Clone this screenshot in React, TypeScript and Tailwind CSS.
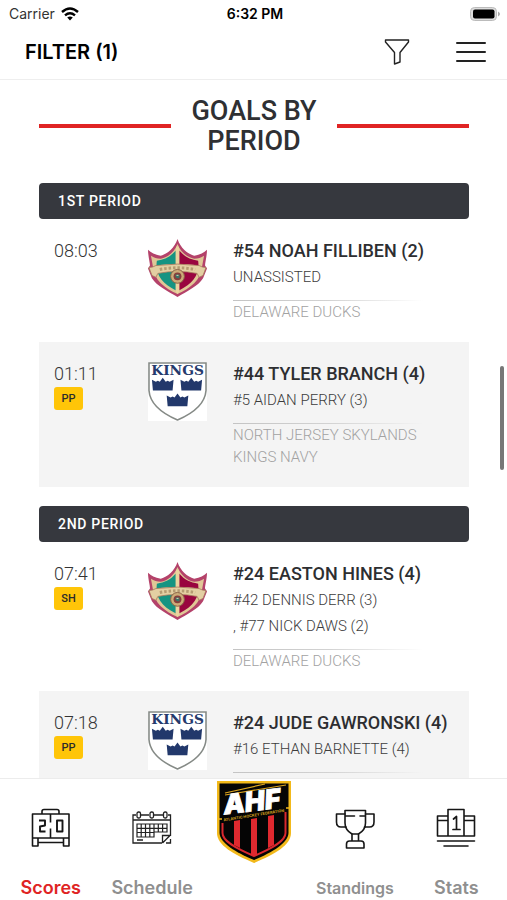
import React from "react";

type Team = "ducks" | "kings";

interface Goal {
  time: string;
  strength?: string;
  team: Team;
  scorer: string;
  assists: string[];
}

interface Period {
  name: string;
  goals: Goal[];
}

const teamNames: Record<Team, string> = {
  ducks: "DELAWARE DUCKS",
  kings: "NORTH JERSEY SKYLANDS KINGS NAVY",
};

const periods: Period[] = [
  {
    name: "1ST PERIOD",
    goals: [
      { time: "08:03", team: "ducks", scorer: "#54 NOAH FILLIBEN (2)", assists: ["UNASSISTED"] },
      { time: "01:11", strength: "PP", team: "kings", scorer: "#44 TYLER BRANCH (4)", assists: ["#5 AIDAN PERRY (3)"] },
    ],
  },
  {
    name: "2ND PERIOD",
    goals: [
      {
        time: "07:41",
        strength: "SH",
        team: "ducks",
        scorer: "#24 EASTON HINES (4)",
        assists: ["#42 DENNIS DERR (3)", ", #77 NICK DAWS (2)"],
      },
      { time: "07:18", strength: "PP", team: "kings", scorer: "#24 JUDE GAWRONSKI (4)", assists: ["#16 ETHAN BARNETTE (4)"] },
    ],
  },
];

function DucksLogo() {
  return (
    <svg viewBox="0 0 60 60" className="size-[59px]" aria-label="Delaware Ducks logo">
      <path d="M30 0 C33 9 40 15 47 17 C53 16 57 14 60 11 C60 17 58 24 58 27 L60 30 L56 40 C51 48 40 53 30 59 C20 53 9 48 4 40 L0 30 L2 27 C2 24 0 17 0 11 C3 14 7 16 13 17 C20 15 27 9 30 0Z" fill="#b4426a" />
      <path d="M30 5 C33 13 40 19 47 20 C51 20 54 19 57 17 L55 28 C54 42 43 50 30 56 C17 50 6 42 5 28 L3 17 C6 19 9 20 13 20 C20 19 27 13 30 5Z" fill="#e0c796" />
      <path d="M28 12 C23 18 17 21 9 22 C7 36 14 45 28 52Z" fill="#159482" />
      <path d="M32 12 C37 18 43 21 51 22 C53 36 46 45 32 52Z" fill="#99053f" />
      <path d="M28.500 8h3v46l-1.500 2-1.500-2z" fill="#ead49f" />
      <path d="M1 29 Q5 29 8 27 Q30 24 52 27 Q55 29 59 29 L56 37 L52 39 L50 35 Q30 31 10 35 L8 39 L4 37Z" fill="#e3cfa2" stroke="#a5775a" strokeWidth="0.8" />
      <path d="M12 31 Q30 27.500 48 31" fill="none" stroke="#b59b72" strokeWidth="3" strokeDasharray="2.500 2" />
      <circle cx="30" cy="38" r="7" fill="#ccab78" stroke="#8a6245" strokeWidth="1" />
      <circle cx="30" cy="38" r="4" fill="#873d3b" />
      <path d="M28 36h4v4h-2l-2-1z" fill="#37766a" />
      <path d="M29 37h2" stroke="#e5d5ad" />
    </svg>
  );
}

function KingsLogo() {
  const crown = "M0 2 L4 4 L6 3 L8 4 L11 0 L14 4 L16 3 L18 4 L22 2 L21 13 H1Z";
  return (
    <svg viewBox="0 0 60 60" className="size-[59px] bg-white" aria-label="Kings logo">
      <path d="M1 1 H59 V29 C58 43 44 53 30 59 C16 53 2 43 1 29Z" fill="#fff" stroke="#858a86" strokeWidth="1.6" />
      <text x="30" y="13" textAnchor="middle" fontFamily="DejaVu Serif, serif" fontWeight="700" fontSize="14" fill="#253a6c">KINGS</text>
      <g fill="#22386b">
        <path d={crown} transform="translate(4 16)" />
        <path d={crown} transform="translate(33 16)" />
        <path d={crown} transform="translate(19 32)" />
      </g>
    </svg>
  );
}

function AhfLogo() {
  return (
    <svg viewBox="0 0 74 84" className="h-[84px] w-[74px]" aria-label="AHF home">
      <path d="M0 1 H74 V53 C74 65 58 74 37 83 C16 74 0 65 0 53Z" fill="#f2b91b" />
      <path d="M2.500 3.500 H71.500 V53 C71 63 56 72 37 80 C18 72 3 63 2.500 53Z" fill="#050505" />
      <path d="M8 13 L48 4 M8 15 L69 5" stroke="#dba51f" strokeWidth="1.200" />
      <text x="36" y="31" transform="rotate(-7 36 31)" textAnchor="middle" fontFamily="Inter, sans-serif" fontWeight="900" fontStyle="italic" fontSize="27" fill="#fff" stroke="#fff" strokeWidth="0.800">AHF</text>
      <text x="37" y="36.500" transform="rotate(-9 37 36.500)" textAnchor="middle" fontFamily="Inter, sans-serif" fontWeight="700" fontSize="3.800" fill="#d9a51f">ATLANTIC HOCKEY FEDERATION</text>
      <path d="M0 39 H5 M69 28 H74" stroke="#f2b91b" strokeWidth="1.500" />
      <path d="M5.500 43 V53 C5.500 61 18 68 37 76 C56 68 68.500 61 68.500 53 V32" fill="none" stroke="#d9282e" strokeWidth="2" />
      <g fill="#df292f">
        <path d="M17 41 L23 40 V68 L17 65Z" />
        <path d="M34 39 L40 38 V75 L37 76 L34 75Z" />
        <path d="M51 36 L57 35 V65 L51 68Z" />
      </g>
    </svg>
  );
}

function ScoreboardIcon() {
  return (
    <svg viewBox="0 0 40 40" className="size-10" fill="none" stroke="#161616" strokeWidth="1.600" strokeLinejoin="round" aria-hidden="true">
      <path d="M11 6 V3.500 Q11 1.500 13 1.500 H26 Q28 1.500 28 3.500 V6 M1.500 6 H38 V30 H1.500Z M19.500 6 V14.500 M19.500 20.500 V30 M1.500 30 V38 H7 V30 M38 30 V38 H32.500 V30 M7 34.500 H32.500" />
      <path d="M8 12.500 H14 V17.500 L9 18.500 V23.500 H14.500 M26 12.500 H31.500 V23.500 H26Z" strokeWidth="1.900" />
    </svg>
  );
}

function CalendarIcon() {
  return (
    <svg viewBox="0 0 40 34" className="h-[34px] w-10" fill="none" stroke="#222" strokeWidth="1.300" aria-hidden="true">
      <path d="M4 4 H1 V32 H30 M38.500 25 V4 H36 M9 4 H17 M22 4 H31 M1 9 H38.500" />
      <rect x="5" y="1" width="3.500" height="6" rx="1.500" />
      <rect x="18" y="1" width="3.500" height="6" rx="1.500" />
      <rect x="31.500" y="1" width="3.500" height="6" rx="1.500" />
      <path d="M5 13 H35 V21 H22 V26 H5Z M5 17.300 H35 M5 21.500 H22 M9.200 13 V26 M13.500 13 V26 M17.800 13 V26 M22 13 V21 M26.300 13 V21 M30.600 13 V21" strokeWidth="1.200" />
      <path d="M30.500 32 V24.500 H38 M30.500 32 L38 24.500 M5 29 H11 M34 32 H38.500 V28" />
    </svg>
  );
}

function TrophyIcon() {
  return (
    <svg viewBox="0 0 40 40" className="size-10" fill="none" stroke="#161616" strokeWidth="1.600" strokeLinejoin="round" strokeLinecap="round" aria-hidden="true">
      <path d="M10 1.500 H30.500 V14 C30.500 19 27 23 23.500 25 H17 C13.500 23 10 19 10 14Z M10 7 H19.500 M25 7 H30.500" />
      <path d="M10 5 H1.500 V13 Q1.500 18 6 18 H11 M30.500 5 H39 V13 Q39 18 34.500 18 H29.500 M17 25 V32 M23.500 25 V32 M11.500 39 V35 Q11.500 32 14.500 32 H26 Q29 32 29 35 V39Z" />
    </svg>
  );
}

function PodiumIcon() {
  return (
    <svg viewBox="0 0 40 40" className="size-10" fill="none" stroke="#161616" strokeWidth="1.600" strokeLinejoin="round" strokeLinecap="round" aria-hidden="true">
      <path d="M12 1.500 H28 V28 H12Z M12 8 H1.500 V28 H12 M28 8 H38.500 V28 H28 M1.500 12.500 H12 M28 12.500 H38.500 M1.500 33 H38.500 M8 38 H32" />
      <path d="M17.500 11 L20.500 8.500 V21.500 M17 21.500 H24" strokeWidth="1.700" />
    </svg>
  );
}

function GoalRow({ goal, shaded }: { goal: Goal; shaded: boolean }) {
  return (
    <li className={shaded ? "flex bg-[#f4f4f4] px-[15px] pt-5 pb-[19px]" : "flex px-[15px] pt-5 pb-[19px]"}>
      <div className="w-[94px] shrink-0">
        <time className="block text-[18px] leading-6 font-light text-[#333]">{goal.time}</time>
        {goal.strength && (
          <span className="mt-px block w-[29px] rounded-[3px] bg-[#ffc508] text-center text-[11px] leading-[23px] font-medium text-[#2b2b2b]">
            {goal.strength}
          </span>
        )}
      </div>
      <div className="w-[85px] shrink-0">{goal.team === "ducks" ? <DucksLogo /> : <KingsLogo />}</div>
      <div className="min-w-0 flex-1">
        <h3 className="mb-px text-[18px] leading-6 font-medium whitespace-nowrap text-[#2d2e31]">{goal.scorer}</h3>
        {goal.assists.map((assist) => (
          <p key={assist} className="text-[15px] leading-[26px] font-light text-[#3c3c3c]">{assist}</p>
        ))}
        <div className="mt-[10px] h-px w-[190px] bg-linear-to-r from-[#c4c4c4] via-[#d2d2d2] to-transparent" />
        <p className="text-[15px] leading-[22px] font-light text-[#a2a2a2]">{teamNames[goal.team]}</p>
      </div>
    </li>
  );
}

const tabClass = "flex flex-1 flex-col items-center";

export default function App() {
  return (
    <div className="relative flex h-screen flex-col overflow-hidden bg-white font-[Roboto,sans-serif]">
      <div className="grid h-[27px] shrink-0 grid-cols-3 items-center pr-[6px] pl-[9px] font-[Inter,sans-serif] text-[14px] text-black">
        <div className="flex items-center gap-[6px] text-[#333]">
          <span>Carrier</span>
          <svg viewBox="0 0 18 14" className="h-[14px] w-[18px]" aria-label="Wi-Fi">
            <g fill="none" stroke="#000" strokeWidth="2.400">
              <path d="M1 5 Q9 -2 17 5" />
              <path d="M4 8.300 Q9 4 14 8.300" />
            </g>
            <path d="M6.200 10.500 Q9 8.500 11.800 10.500 L9 13.500Z" />
          </svg>
        </div>
        <span className="text-center font-semibold">6:32 PM</span>
        <svg viewBox="0 0 31 14" className="h-[14px] w-[31px] justify-self-end" aria-label="Battery full">
          <rect x="0.500" y="0.500" width="26" height="13" rx="4" fill="#ddd" stroke="#bbb" />
          <rect x="3" y="2.500" width="21.500" height="9" rx="2" fill="#000" />
          <path d="M28 4.500 Q32 7 28 9.500Z" fill="#aaa" />
        </svg>
      </div>

      <header className="flex h-[53px] shrink-0 items-center border-b border-[#eee] pr-[21px] pb-[2px] pl-[25px]">
        <h1 className="flex-1 font-[Inter,sans-serif] text-[20px] font-semibold text-black">FILTER (1)</h1>
        <button type="button" aria-label="Filter" className="mr-[46px]">
          <svg viewBox="0 0 26 26" className="size-[26px]" fill="none" stroke="#222" strokeWidth="1.400" strokeLinejoin="round">
            <path d="M1.500 1 H24.500 V3 L16 13.500 V23 L10.500 25 V13.500 L1.500 3Z" />
          </svg>
        </button>
        <button type="button" aria-label="Menu" className="flex w-[30px] flex-col gap-[7px]">
          <span className="h-[2px] rounded-full bg-[#222]" />
          <span className="h-[2px] rounded-full bg-[#222]" />
          <span className="h-[2px] rounded-full bg-[#222]" />
        </button>
      </header>

      <main className="min-h-0 flex-1 overflow-hidden pt-4 pr-[38px] pl-[39px]">
        <div className="flex items-center">
          <span className="h-1 flex-1 bg-[#e02424]" />
          <h2 className="w-[166px] px-4 text-center text-[27px] leading-[30px] font-medium text-[#2f3033]">GOALS BY PERIOD</h2>
          <span className="h-1 flex-1 bg-[#e02424]" />
        </div>
        <div className="mt-[27px] flex flex-col gap-[19px]">
          {periods.map((period) => (
            <section key={period.name}>
              <h3 className="rounded bg-[#36383e] px-[19px] text-[14px] leading-9 font-medium tracking-wider text-white">{period.name}</h3>
              <ul>
                {period.goals.map((goal, i) => (
                  <GoalRow key={goal.time} goal={goal} shaded={i % 2 === 1} />
                ))}
              </ul>
            </section>
          ))}
        </div>
      </main>

      <nav className="flex h-[122px] shrink-0 border-t border-[#ececec] bg-white font-[Inter,sans-serif] text-[18px] leading-6 font-semibold text-[#8f8f8f]">
        <a href="#scores" className={tabClass + " pt-[29px] text-[#df2424]"}>
          <span className="h-[70px]"><ScoreboardIcon /></span>
          Scores
        </a>
        <a href="#schedule" className={tabClass + " pt-[32px]"}>
          <span className="h-[67px]"><CalendarIcon /></span>
          Schedule
        </a>
        <a href="#home" className={tabClass + " pt-px"}>
          <AhfLogo />
        </a>
        <a href="#standings" className={tabClass + " pt-[30px] text-[16px]"}>
          <span className="h-[70px]"><TrophyIcon /></span>
          Standings
        </a>
        <a href="#stats" className={tabClass + " pt-[29px]"}>
          <span className="h-[70px]"><PodiumIcon /></span>
          Stats
        </a>
      </nav>

      <div className="absolute top-[366px] right-[3px] h-[104px] w-1 rounded-full bg-[#777]" />
    </div>
  );
}
